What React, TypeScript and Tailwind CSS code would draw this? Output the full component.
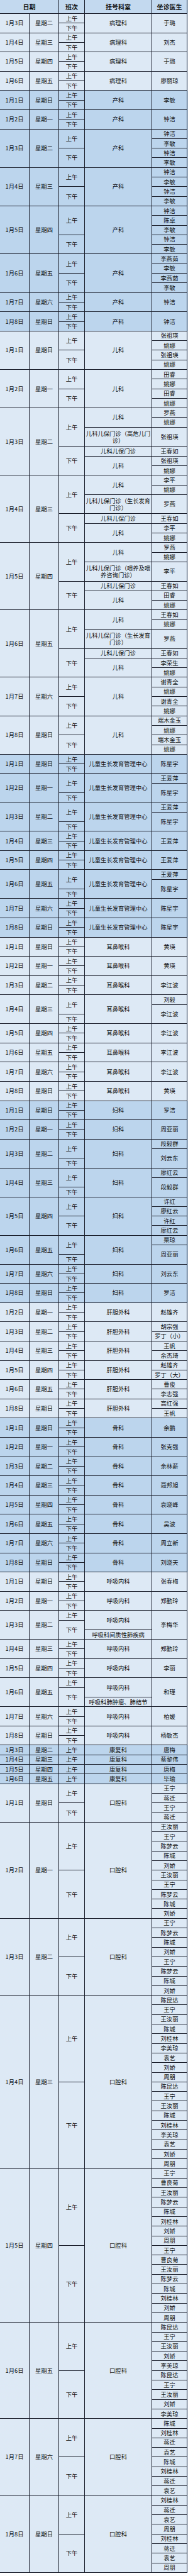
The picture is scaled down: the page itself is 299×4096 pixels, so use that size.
import type { CSSProperties, ReactNode } from "react";

type Part = [string, number];
type Day = { d: string; w: string; s: Part[]; k: Part[]; p: Part[] };
type Section = { tone: "light" | "dark"; days: Day[] };

const AM = "上午";
const PM = "下午";

const simple = (d: string, w: string, dept: string, doc: string): Day => ({
  d,
  w,
  s: [[AM, 1], [PM, 1]],
  k: [[dept, 2]],
  p: [[doc, 2]],
});

const split = (d: string, w: string, dept: string, am: string, pm: string): Day => ({
  d,
  w,
  s: [[AM, 1], [PM, 1]],
  k: [[dept, 2]],
  p: [[am, 1], [pm, 1]],
});

const multi = (d: string, w: string, dept: string, am: string[], pm: string[] = am): Day => ({
  d,
  w,
  s: [[AM, am.length], [PM, pm.length]],
  k: [[dept, am.length + pm.length]],
  p: [...am, ...pm].map((n) => [n, 1] as Part),
});

const three = (d: string, w: string, dept: string, first: string, second: string): Day => ({
  d,
  w,
  s: [[AM, 2], [PM, 1]],
  k: [[dept, 3]],
  p: [[first, 1], [second, 2]],
});

const morning = (d: string, w: string, dept: string, doc: string): Day => ({
  d,
  w,
  s: [[AM, 1]],
  k: [[dept, 1]],
  p: [[doc, 1]],
});

const kid = (d: string, w: string, special: string, a: string, b: string, c: string, e: string, f: string, g: string, am = 4): Day => ({
  d,
  w,
  s: [[AM, am], [PM, 3]],
  k: [["儿科", 2], [special, 2], ["儿科儿保门诊", 1], ["儿科", 2]],
  p: [[a, 1], [b, 1], [c, 2], [e, 1], [f, 1], [g, 1]],
});

const lung = (d: string, w: string, special: string, doc: string): Day => ({
  d,
  w,
  s: [[AM, 1], [PM, 2]],
  k: [["呼吸内科", 2], [special, 1]],
  p: [[doc, 3]],
});

const GROWTH = "儿童生长发育管理中心";

const sections: Section[] = [
  {
    tone: "light",
    days: [
      simple("1月3日", "星期二", "病理科", "于璐"),
      simple("1月4日", "星期三", "病理科", "刘杰"),
      simple("1月5日", "星期四", "病理科", "于璐"),
      simple("1月6日", "星期五", "病理科", "廖丽琼"),
    ],
  },
  {
    tone: "dark",
    days: [
      simple("1月1日", "星期日", "产科", "李敏"),
      simple("1月2日", "星期一", "产科", "钟洁"),
      multi("1月3日", "星期二", "产科", ["钟洁", "李敏"]),
      multi("1月4日", "星期三", "产科", ["钟洁", "李敏"]),
      multi("1月5日", "星期四", "产科", ["钟洁", "陈卓", "李敏"], ["钟洁", "李敏"]),
      multi("1月6日", "星期五", "产科", ["李燕茹", "李敏"]),
      simple("1月7日", "星期六", "产科", "钟洁"),
      simple("1月8日", "星期日", "产科", "钟洁"),
    ],
  },
  {
    tone: "light",
    days: [
      multi("1月1日", "星期日", "儿科", ["张祖瑛", "姚娜"]),
      multi("1月2日", "星期一", "儿科", ["田睿", "姚娜"]),
      kid("1月3日", "星期二", "儿科儿保门诊（高危儿门诊）", "罗燕", "姚娜", "张祖瑛", "王春如", "张祖瑛", "姚娜"),
      kid("1月4日", "星期三", "儿科儿保门诊（生长发育门诊）", "李平", "姚娜", "罗燕", "王春如", "李平", "姚娜"),
      kid("1月5日", "星期四", "儿科儿保门诊（喂养及喂养咨询门诊）", "罗燕", "姚娜", "李平", "王春如", "田睿", "姚娜"),
      kid("1月6日", "星期五", "儿科儿保门诊（生长发育门诊）", "王春如", "姚娜", "罗燕", "王春如", "李荣生", "姚娜"),
      multi("1月7日", "星期六", "儿科", ["谢青全", "姚娜"]),
      multi("1月8日", "星期日", "儿科", ["端木金玉", "姚娜"]),
    ],
  },
  {
    tone: "dark",
    days: [
      simple("1月1日", "星期日", GROWTH, "陈星宇"),
      three("1月2日", "星期一", GROWTH, "王爱萍", "陈星宇"),
      three("1月3日", "星期二", GROWTH, "王爱萍", "陈星宇"),
      simple("1月4日", "星期三", GROWTH, "王爱萍"),
      simple("1月5日", "星期四", GROWTH, "王爱萍"),
      three("1月6日", "星期五", GROWTH, "王爱萍", "陈星宇"),
      simple("1月7日", "星期六", GROWTH, "陈星宇"),
      simple("1月8日", "星期日", GROWTH, "陈星宇"),
    ],
  },
  {
    tone: "light",
    days: [
      simple("1月1日", "星期日", "耳鼻喉科", "黄瑛"),
      simple("1月2日", "星期一", "耳鼻喉科", "黄瑛"),
      simple("1月3日", "星期二", "耳鼻喉科", "李江波"),
      three("1月4日", "星期三", "耳鼻喉科", "刘毅", "李江波"),
      simple("1月5日", "星期四", "耳鼻喉科", "李江波"),
      simple("1月6日", "星期五", "耳鼻喉科", "李江波"),
      simple("1月7日", "星期六", "耳鼻喉科", "李江波"),
      simple("1月8日", "星期日", "耳鼻喉科", "黄瑛"),
    ],
  },
  {
    tone: "dark",
    days: [
      simple("1月1日", "星期日", "妇科", "罗洁"),
      simple("1月2日", "星期一", "妇科", "周亚丽"),
      three("1月3日", "星期二", "妇科", "段毅群", "刘云东"),
      three("1月4日", "星期三", "妇科", "廖红云", "段毅群"),
      multi("1月5日", "星期四", "妇科", ["许红", "廖红云"]),
      three("1月6日", "星期五", "妇科", "栗琼", "周亚丽"),
      simple("1月7日", "星期六", "妇科", "刘云东"),
      simple("1月8日", "星期日", "妇科", "罗洁"),
    ],
  },
  {
    tone: "light",
    days: [
      simple("1月2日", "星期一", "肝胆外科", "赵雄齐"),
      split("1月3日", "星期二", "肝胆外科", "胡宗强", "罗丁（小）"),
      split("1月4日", "星期三", "肝胆外科", "王帆", "余杰琦"),
      split("1月5日", "星期四", "肝胆外科", "赵雄齐", "罗丁（大）"),
      split("1月6日", "星期五", "肝胆外科", "曹俊", "李志强"),
      split("1月8日", "星期日", "肝胆外科", "高红强", "王帆"),
    ],
  },
  {
    tone: "dark",
    days: [
      simple("1月1日", "星期日", "骨科", "余鹏"),
      simple("1月2日", "星期一", "骨科", "张克强"),
      simple("1月3日", "星期二", "骨科", "余林薪"),
      simple("1月4日", "星期三", "骨科", "聂邦旭"),
      simple("1月5日", "星期四", "骨科", "袁晓峰"),
      simple("1月6日", "星期五", "骨科", "吴波"),
      simple("1月7日", "星期六", "骨科", "周立新"),
      simple("1月8日", "星期日", "骨科", "刘晓天"),
    ],
  },
  {
    tone: "light",
    days: [
      simple("1月1日", "星期日", "呼吸内科", "张春梅"),
      simple("1月2日", "星期一", "呼吸内科", "郑勤玲"),
      lung("1月3日", "星期二", "呼吸科间质性肺疾病", "李梅华"),
      simple("1月4日", "星期三", "呼吸内科", "郑勤玲"),
      simple("1月5日", "星期四", "呼吸内科", "李丽"),
      lung("1月6日", "星期五", "呼吸科肺肿瘤、肺结节", "和瑾"),
      simple("1月7日", "星期六", "呼吸内科", "柏媛"),
      simple("1月8日", "星期日", "呼吸内科", "杨敏杰"),
    ],
  },
  {
    tone: "dark",
    days: [
      morning("1月3日", "星期二", "康复科", "唐梅"),
      morning("1月4日", "星期三", "康复科", "蔡黎伟"),
      morning("1月5日", "星期四", "康复科", "唐梅"),
      morning("1月6日", "星期五", "康复科", "毕瑜"),
    ],
  },
  {
    tone: "light",
    days: [
      multi("1月1日", "星期日", "口腔科", ["王宁", "蒋迁"]),
      multi("1月2日", "星期一", "口腔科", ["王汝丽", "王宁", "陈梦云", "陈城", "刘娇"]),
      multi("1月3日", "星期二", "口腔科", ["王宁", "陈梦云", "陈城", "刘娇"]),
      multi("1月4日", "星期三", "口腔科", ["陈昆达", "王宁", "王汝丽", "陈城", "刘桂林", "李美琼", "袁艺", "刘娇", "周朋"]),
      multi("1月5日", "星期四", "口腔科", ["王宁", "曹良菊", "王汝丽", "陈梦云", "陈城", "刘桂林", "刘娇", "周朋"]),
      multi("1月6日", "星期五", "口腔科", ["陈昆达", "王宁", "王汝丽", "刘娇", "李美琼"]),
      multi("1月7日", "星期六", "口腔科", ["陈城", "刘桂林", "蒋迁", "袁艺"]),
      multi("1月8日", "星期日", "口腔科", ["刘桂林", "蒋迁", "袁艺", "周朋"]),
    ],
  },
];

function Cell({ className = "", style, children }: { className?: string; style?: CSSProperties; children: ReactNode }) {
  return (
    <div
      className={`flex items-center justify-center border-r border-b border-[#1b1f2c] text-center leading-[11px] ${className}`}
      style={style}
    >
      {children}
    </div>
  );
}

function DayBlock({ day }: { day: Day }) {
  const total = day.s.reduce((n, [, r]) => n + r, 0);
  const cells: ReactNode[] = [];

  const stack = (parts: Part[], col: string, key: string) => {
    let row = 1;
    parts.forEach(([text, span], i) => {
      cells.push(
        <Cell key={key + i} className={col} style={{ gridRow: `${row} / span ${span}` }}>
          {text}
        </Cell>
      );
      row += span;
    });
  };

  stack(day.s, "col-start-3", "s");
  stack(day.k, "col-start-4", "k");
  stack(day.p, "col-start-5", "p");

  return (
    <div className="grid grid-cols-[47px_47px_41px_107px_56px] auto-rows-[15.31px]">
      <Cell className="col-start-1" style={{ gridRow: `1 / span ${total}` }}>
        {day.d}
      </Cell>
      <Cell className="col-start-2" style={{ gridRow: `1 / span ${total}` }}>
        {day.w}
      </Cell>
      {cells}
    </div>
  );
}

export default function App() {
  return (
    <div
      className="w-[299px] bg-[#dde9f5] text-[9.3px] text-[#111]"
      style={{ fontFamily: '"Noto Sans CJK SC", "Noto Sans", sans-serif' }}
    >
      <div className="grid h-[22px] grid-cols-[47px_47px_41px_107px_56px] bg-[#c3d9ef] text-[10px] font-bold">
        <Cell className="col-span-2">日期</Cell>
        <Cell>班次</Cell>
        <Cell>挂号科室</Cell>
        <Cell>坐诊医生</Cell>
      </div>
      {sections.map((section, i) => (
        <div key={i} className={section.tone === "light" ? "bg-[#dde9f5]" : "bg-[#bcd5ed]"}>
          {section.days.map((day, j) => (
            <DayBlock key={j} day={day} />
          ))}
        </div>
      ))}
    </div>
  );
}
